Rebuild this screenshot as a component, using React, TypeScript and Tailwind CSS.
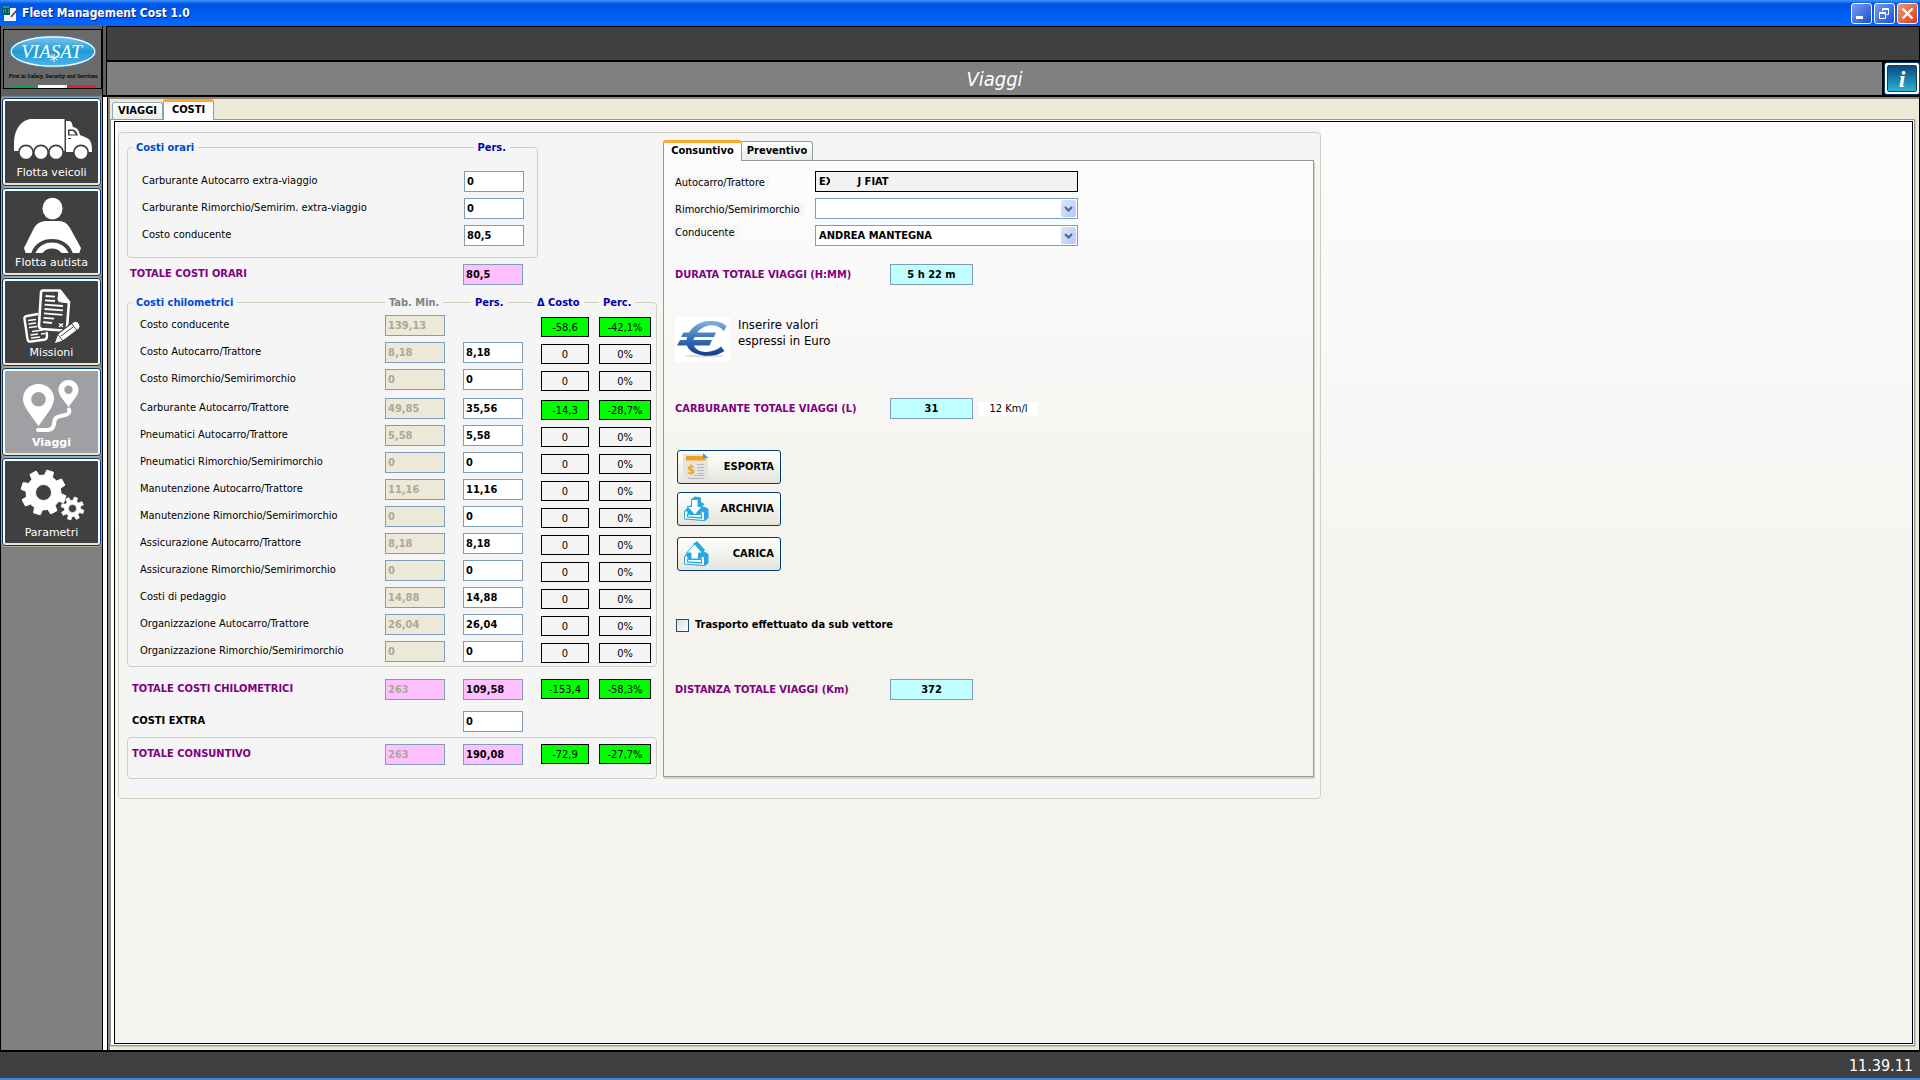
import type { ReactNode } from 'react'

type Delta = { costo: string; perc: string; green?: boolean }
type Row = { label: string; min: string; pers?: string; delta: Delta }

const zero: Delta = { costo: '0', perc: '0%' }

const firstRows: Row[] = [
  { label: 'Costo conducente', min: '139,13', delta: { costo: '-58,6', perc: '-42,1%', green: true } },
  { label: 'Costo Autocarro/Trattore', min: '8,18', pers: '8,18', delta: zero },
  { label: 'Costo Rimorchio/Semirimorchio', min: '0', pers: '0', delta: zero },
]

const otherRows: Row[] = [
  { label: 'Carburante Autocarro/Trattore', min: '49,85', pers: '35,56', delta: { costo: '-14,3', perc: '-28,7%', green: true } },
  { label: 'Pneumatici Autocarro/Trattore', min: '5,58', pers: '5,58', delta: zero },
  { label: 'Pneumatici Rimorchio/Semirimorchio', min: '0', pers: '0', delta: zero },
  { label: 'Manutenzione Autocarro/Trattore', min: '11,16', pers: '11,16', delta: zero },
  { label: 'Manutenzione Rimorchio/Semirimorchio', min: '0', pers: '0', delta: zero },
  { label: 'Assicurazione Autocarro/Trattore', min: '8,18', pers: '8,18', delta: zero },
  { label: 'Assicurazione Rimorchio/Semirimorchio', min: '0', pers: '0', delta: zero },
  { label: 'Costi di pedaggio', min: '14,88', pers: '14,88', delta: zero },
  { label: 'Organizzazione Autocarro/Trattore', min: '26,04', pers: '26,04', delta: zero },
  { label: 'Organizzazione Rimorchio/Semirimorchio', min: '0', pers: '0', delta: zero },
]

function gearPath(cx: number, cy: number, outer: number, inner: number, hole: number, teeth: number, turn: number) {
  const step = (Math.PI * 2) / teeth
  const at = (r: number, a: number) => `${(cx + r * Math.cos(a)).toFixed(2)} ${(cy + r * Math.sin(a)).toFixed(2)}`
  const pts: string[] = []
  for (let i = 0; i < teeth; i++) {
    const a = i * step + turn
    pts.push(at(inner, a - step * 0.3), at(outer, a - step * 0.2), at(outer, a + step * 0.2), at(inner, a + step * 0.3))
  }
  return `M${pts.join('L')}ZM${cx + hole} ${cy}A${hole} ${hole} 0 1 0 ${cx - hole} ${cy}A${hole} ${hole} 0 1 0 ${cx + hole} ${cy}Z`
}

function TruckIcon() {
  return (
    <svg viewBox="5 101 93 62" className="w-[93px] h-[62px]" aria-hidden="true">
      <path fill="#fff" d="M14 151V143C14 129 22 119 32 119H64.500V151Z" />
      <path fill="#fff" d="M66 121H70C72 122 72 124 73 127C78 128 79 131 80 135L87 138C91 140 92 144 92 152H66Z" />
      <path fill="#404040" d="M68 129.500H73C76 130 77 132 78 135.500H68Z" />
      <path fill="#fff" d="M69.500 131H72.500C74 131.500 75 133 75.500 134.500H69.500Z" />
      <path fill="#404040" d="M68 138H71V139H68Z" />
      {[26, 41, 56, 81].map((x) => (
        <circle key={x} cx={x} cy="152.500" r="7.200" fill="#fff" stroke="#404040" strokeWidth="1.700" />
      ))}
    </svg>
  )
}

function DriverIcon() {
  return (
    <svg viewBox="5 191 93 62" className="w-[93px] h-[62px]" fill="#fff" aria-hidden="true">
      <ellipse cx="52.500" cy="208.500" rx="10" ry="10.800" />
      <path d="M26 254L24 248L34 228Q38 221 46 221H59Q66 221 70 228L81 248L79 254H73C70 244 62 239 52 239S34 244 31 254Z" />
      <path d="M35 254C38 246 45 242.500 52 242.500S66 246 69 254Z" />
      <path d="M42 254C44 250 48 248.500 52 248.500S60 250 62 254Z" fill="#404040" />
    </svg>
  )
}

function DocsIcon() {
  return (
    <svg viewBox="5 281 93 62" className="w-[93px] h-[62px]" fill="none" stroke="#fff" strokeLinejoin="round" aria-hidden="true">
      <path strokeWidth="2.400" d="M38 314L27 316Q24 316.500 24.500 319L27.500 339Q28 342 31 341.500L45 339.500Q47 339 47 336L46.500 332" />
      <path strokeWidth="1.700" d="M28 320.500L36 319.500M28.500 324L36 323M29 327.500L37 326.500M32 331.500L43 330M30.500 335L38 334M31 338L40 337M41 334L45 333.500" />
      <path fill="#404040" strokeWidth="2.600" d="M43 290.500H60L69 302L67 327Q66.500 330.500 63 330.500L42 329Q38.500 328.500 39 325L41 293Q41 290.500 43 290.500Z" />
      <path fill="#fff" strokeWidth="1" d="M59 290L58 299Q58 302 61 302L70 303Z" />
      <path strokeWidth="1.800" d="M45.500 296L55 296.600M45 300.300L55 301M44.500 304.600L63 306M44.500 309L63 310.400M44 313.400L62.500 314.800M43.500 317.800L54 318.600M43 322.200L52 323" />
      <path strokeWidth="1.500" d="M59 323.500L63 327M63 323.500L59 327" />
      <path fill="#fff" stroke="#404040" strokeWidth="1.200" d="M54 344L57.500 334L74 321.500Q76 320.500 78 322L80 325Q80.500 327 79 329L63 341Z" />
      <path stroke="#404040" strokeWidth="1" d="M57.500 334L63 341M71.500 323.500L77 330.500M61 336L73 327" />
    </svg>
  )
}

function RouteIcon() {
  return (
    <svg viewBox="5 371 93 62" className="w-[93px] h-[62px]" fill="#fff" aria-hidden="true">
      <path fillRule="evenodd" d="M38.500 384C47.500 384 54 390.500 54 399C54 406 47 414 38.500 426C30 414 23 406 23 399C23 390.500 29.500 384 38.500 384ZM38.500 392A7.300 7.300 0 1 0 38.500 406.600A7.300 7.300 0 1 0 38.500 392Z" />
      <path fillRule="evenodd" d="M68.500 380C74.500 380 78.500 384.500 78.500 390C78.500 395 74 399 68.500 407C63 399 58.500 395 58.500 390C58.500 384.500 62.500 380 68.500 380ZM68.500 385.500A4.200 4.200 0 1 0 68.500 393.900A4.200 4.200 0 1 0 68.500 385.500Z" />
      <path fill="none" stroke="#fff" strokeWidth="4" strokeLinecap="round" d="M38 430H47C53 430 54 426 54.500 421C55 416 60 416 63 415.500C68 415 70 413 69 409.500" />
    </svg>
  )
}

function GearsIcon() {
  return (
    <svg viewBox="5 461 93 62" className="w-[93px] h-[62px]" fill="#fff" fillRule="evenodd" aria-hidden="true">
      <path d={gearPath(43.5, 492.5, 22.6, 17.5, 8, 8, 0.3)} stroke="#fff" strokeLinejoin="round" />
      <path d={gearPath(72.5, 508.5, 11.6, 8.2, 4, 8, 0.3)} stroke="#fff" strokeLinejoin="round" strokeWidth=".6" />
    </svg>
  )
}

function ViasatLogo() {
  return (
    <svg viewBox="0 0 97 58" className="w-[97px] h-[58px]" aria-hidden="true">
      <defs>
        <linearGradient id="oval" x1="0" y1="0" x2="0" y2="1">
          <stop offset="0" stopColor="#7cc4ea" />
          <stop offset=".5" stopColor="#219bd8" />
          <stop offset="1" stopColor="#4db4e6" />
        </linearGradient>
      </defs>
      <ellipse cx="49" cy="21.500" rx="43.500" ry="16.300" fill="#3f8fc0" />
      <ellipse cx="49" cy="21.500" rx="41.800" ry="14.700" fill="url(#oval)" stroke="#fff" strokeWidth="1.200" />
      <text x="47.500" y="28" textAnchor="middle" fontFamily="'Liberation Serif', serif" fontStyle="italic" fontSize="19" fill="#fff">
        VIASAT
      </text>
      <path d="M50 24V32M46.500 26L53.500 30M53.500 26L46.500 30" stroke="#fff" strokeWidth="1" />
      <text x="49" y="48" textAnchor="middle" fontFamily="'Liberation Serif', serif" fontSize="6" fill="#000" stroke="#000" strokeWidth=".15">
        First in Safety, Security and Services
      </text>
      <path fill="#12a04a" d="M5 55H34V58H5Z" />
      <path fill="#fff" d="M34 55H63V58H34Z" />
      <path fill="#e3202b" d="M63 55H92V58H63Z" />
    </svg>
  )
}

function EuroIcon() {
  return (
    <svg viewBox="0 0 55 45" className="w-[55px] h-[45px] bg-white" aria-hidden="true">
      <defs>
        <linearGradient id="euro" x1="0" y1="0" x2="0" y2="1">
          <stop offset="0" stopColor="#7fb0e2" />
          <stop offset=".5" stopColor="#3a70b8" />
          <stop offset="1" stopColor="#123a8c" />
        </linearGradient>
      </defs>
      <ellipse cx="29" cy="39" rx="20" ry="1.500" fill="#ddd" />
      <path fill="url(#euro)" d="M51.500 9L49 14C44 8 36 7 29 10C26 11.500 23.500 13.500 22 15.500H41L39 20H19.500L18.500 23H37L34.500 28.500H19C21 34 29 36.500 37 34C41 33 43.500 31.500 46 29.500L49.500 34C43 38.500 34 40 26 38C18 36.500 13.500 33 12 28.500H2L5 23H11.500L12 20H6L8.500 15.500H14C18 9 25 4.500 34 4C42 3.700 48 5.500 51.500 9Z" />
    </svg>
  )
}

function ReportIcon() {
  return (
    <svg viewBox="0 0 26 28" className="w-[26px] h-[28px]" aria-hidden="true">
      <path fill="#e4e4e6" d="M0 1H20L25 6V28H0Z" />
      <path fill="#f0a020" d="M3 3H22.500V7.500H3Z" />
      <path fill="#3d9cc8" d="M20 0L25.500 5H20Z" />
      <text x="4" y="21" fontFamily="'DejaVu Sans'" fontWeight="bold" fontSize="12" fill="#f0a81c">$</text>
      <path stroke="#b8b8bc" d="M14 11.500H21M14 14.500H21M14 17.500H21M14 20.500H21M11 22.500H21M5 25.500H21" />
    </svg>
  )
}

function TrayIcon({ up }: { up?: boolean }) {
  return (
    <svg viewBox="0 0 26 26" className="w-[26px] h-[26px]" aria-hidden="true">
      <path fill="#29a8e0" d="M3 13L8 9L22 11L25.500 13V22L22 25L1 23V16Z" />
      <path fill="#fff" stroke="#29a8e0" d="M1.500 16L4 14L5.500 18.500H17.500L19 15L21.500 16.500V24.500L1.500 23Z" />
      <path fill="none" stroke="#29a8e0" strokeWidth="1.300" d="M4.500 18V21L18.500 22V18" />
      {up ? (
        <>
          <path fill="#29a8e0" d="M10 3L14 0L22 9L20 12L17 10Z" />
          <path fill="#fff" stroke="#29a8e0" d="M11.500 3L19.500 12H15.500V18H8V12H3.500Z" />
        </>
      ) : (
        <>
          <path fill="#29a8e0" d="M8 3L12 .5L18 1.500V6L21.500 8L18 12L11 8Z" />
          <path fill="#fff" stroke="#29a8e0" d="M8.500 3.500H15V10.500H19L12 19L4 10.500H8.500Z" />
        </>
      )}
    </svg>
  )
}

function NavButton({ label, icon, active }: { label: string; icon: ReactNode; active?: boolean }) {
  return (
    <button className="block w-full border border-[#003c74] rounded-[3px] outline outline-[#a8a8a0]">
      <span
        className={`flex flex-col items-center h-[86px] border-2 border-b-[#e8e6d8] border-white rounded-[3px] text-white font-['DejaVu_Sans',sans-serif] ${
          active ? 'bg-[#a0a0a4] font-bold' : 'bg-[#404040]'
        }`}
      >
        {icon}
        <span className="leading-5">{label}</span>
      </span>
    </button>
  )
}

function Field({ label, value, tone = 'white', disabled }: { label: string; value: string; tone?: 'white' | 'pink' | 'beige'; disabled?: boolean }) {
  const bg = tone === 'pink' ? 'bg-[#ffc0ff]' : tone === 'beige' ? 'bg-[#ece9d8]' : 'bg-white'
  return (
    <input
      aria-label={label}
      defaultValue={value}
      disabled={disabled}
      className={`w-[60px] h-[21px] px-[2px] border border-[#7f9db9] font-bold ${bg} ${disabled ? 'text-[#aca899]' : 'text-black'}`}
    />
  )
}

function DeltaCells({ delta }: { delta: Delta }) {
  const bg = delta.green ? 'bg-[#00ff00]' : ''
  return (
    <>
      <output className={`w-12 h-5 border border-black text-center leading-5 ${bg}`}>{delta.costo}</output>
      <output className={`w-[52px] h-5 border border-black text-center leading-5 ${bg}`}>{delta.perc}</output>
    </>
  )
}

const grid = 'grid grid-cols-[1fr_78px_78px_58px_52px]'

function CostRow({ row }: { row: Row }) {
  return (
    <div className="grid grid-cols-[1fr_78px_78px_110px] h-[22px]">
      <span className="leading-5">{row.label}</span>
      <Field label={`${row.label} Tab. Min.`} value={row.min} tone="beige" disabled />
      {row.pers !== undefined ? <Field label={row.label} value={row.pers} /> : <span />}
      <div className="flex items-end justify-between">
        <DeltaCells delta={row.delta} />
      </div>
    </div>
  )
}

function HourRow({ id, label, value }: { id: string; label: string; value: string }) {
  return (
    <div className="flex justify-between">
      <label htmlFor={id} className="leading-5">{label}</label>
      <input id={id} defaultValue={value} className="w-[60px] h-[21px] px-[2px] bg-white border border-[#7f9db9] font-bold" />
    </div>
  )
}

function Combo({ id, value }: { id: string; value: string }) {
  return (
    <div className="relative w-[263px]">
      <select id={id} defaultValue={value} className="block appearance-none w-full h-[21px] pl-[3px] bg-white border border-[#7f9db9] font-bold">
        <option value={value}>{value}</option>
      </select>
      <span className="pointer-events-none absolute right-[2px] top-[2px] flex items-center justify-center w-[15px] h-[17px] rounded-[2px] bg-linear-to-br from-[#dbe6fe] to-[#b3c8f8]">
        <svg viewBox="0 0 9 6" className="w-[9px] h-[6px]" fill="none" stroke="#4d6185" strokeWidth="2" aria-hidden="true">
          <path d="M1 1L4.500 4.500L8 1" />
        </svg>
      </span>
    </div>
  )
}

function TotalBox({ id, label, value, note }: { id: string; label: string; value: string; note?: string }) {
  return (
    <div className="flex items-center">
      <label htmlFor={id} className="w-[215px] font-bold text-[#800080]">{label}</label>
      <input id={id} readOnly defaultValue={value} className="w-[83px] h-[21px] bg-[#c0ffff] border border-[#7f9db9] text-center font-bold" />
      {note && <span className="ml-1.5 w-[59px] bg-white text-center leading-[14px]">{note}</span>}
    </div>
  )
}

function ActionButton({ label, icon }: { label: string; icon: ReactNode }) {
  return (
    <button className="flex items-center justify-between w-[104px] h-[34px] pl-[5px] pr-[6px] border border-[#003c74] rounded-[3px] bg-linear-to-b from-white via-[#f2f2ee] to-[#e6e4da] font-bold">
      {icon}
      {label}
    </button>
  )
}

const groupBox = 'border border-[#d0d0bf] rounded-[4px]'
const head = 'bg-[#f5f5f5] px-1 font-bold'

function CostsColumn() {
  return (
    <div className="w-[530px] ml-2 mt-[14px]">
      <fieldset className={`${groupBox} w-[411px] h-[111px] pl-[14px] pr-[13px]`}>
        <div className="flex justify-between -mt-2 -ml-2.5 pr-[14px] leading-4">
          <span className={`${head} text-[#0046d5]`}>Costi orari</span>
          <span className={`${head} text-[#0000b0]`}>Pers.</span>
        </div>
        <div className="flex flex-col gap-[6px] mt-[15px]">
          <HourRow id="extra-autocarro" label="Carburante Autocarro extra-viaggio" value="0" />
          <HourRow id="extra-rimorchio" label="Carburante Rimorchio/Semirim. extra-viaggio" value="0" />
          <HourRow id="orario-conducente" label="Costo conducente" value="80,5" />
        </div>
      </fieldset>

      <div className={`${grid} mt-[6px] pl-[3px] pr-[6px] h-[21px]`}>
        <span className="col-span-2 leading-5 font-bold text-[#800080]">TOTALE COSTI ORARI</span>
        <Field label="Totale costi orari" value="80,5" tone="pink" />
      </div>

      <fieldset className={`${groupBox} mt-[17px] pl-3 pr-[5px] pb-[3px]`}>
        <div className={`${grid} -mt-2 -ml-2 leading-4`}>
          <span><span className={`${head} text-[#0046d5]`}>Costi chilometrici</span></span>
          <span><span className={`${head} text-[#808080]`}>Tab. Min.</span></span>
          <span className="pl-2"><span className={`${head} text-[#0000b0]`}>Pers.</span></span>
          <span className="-ml-2"><span className={`${head} text-[#0000b0]`}>Δ Costo</span></span>
          <span><span className={`${head} text-[#0000b0]`}>Perc.</span></span>
        </div>
        <div className="flex flex-col gap-[5px] mt-1">
          {firstRows.map((row) => <CostRow key={row.label} row={row} />)}
        </div>
        <div className="flex flex-col gap-[5px] mt-[7px]">
          {otherRows.map((row) => <CostRow key={row.label} row={row} />)}
        </div>
      </fieldset>

      <div className={`${grid} mt-3 pl-[5px] pr-[6px] h-[21px]`}>
        <span className="leading-5 font-bold text-[#800080]">TOTALE COSTI CHILOMETRICI</span>
        <Field label="Totale costi chilometrici Tab. Min." value="263" tone="pink" disabled />
        <Field label="Totale costi chilometrici" value="109,58" tone="pink" />
        <DeltaCells delta={{ costo: '-153,4', perc: '-58,3%', green: true }} />
      </div>

      <div className={`${grid} mt-[11px] pl-[5px] pr-[6px] h-[21px]`}>
        <span className="col-span-2 leading-5 font-bold">COSTI EXTRA</span>
        <Field label="Costi extra" value="0" />
      </div>

      <div className={`${groupBox} ${grid} mt-[5px] pt-[6px] pl-1 pr-[5px] h-[42px] items-start`}>
        <span className="leading-5 font-bold text-[#800080]">TOTALE CONSUNTIVO</span>
        <Field label="Totale consuntivo Tab. Min." value="263" tone="pink" disabled />
        <Field label="Totale consuntivo" value="190,08" tone="pink" />
        <DeltaCells delta={{ costo: '-72,9', perc: '-27,7%', green: true }} />
      </div>
    </div>
  )
}

function SummaryPanel() {
  const patch = 'bg-[#f5f5f5] px-[2px] pr-1 -ml-[2px] leading-[13px]'
  return (
    <div className="flex flex-col w-[651px] ml-[6px] mt-[7px] mb-[21px]">
      <div className="relative z-10 flex items-end h-[21px] -mb-px" role="tablist">
        <button role="tab" aria-selected="true" className="w-[79px] h-[21px] pb-[3px] border-t-[3px] border-x border-t-[#ffa82d] border-x-[#919b9c] rounded-t-[3px] bg-[#fcfcfe] font-bold leading-4">
          Consuntivo
        </button>
        <button role="tab" aria-selected="false" className="w-[71px] h-[19px] mb-px border border-l-0 border-b-0 border-[#919b9c] rounded-tr-[3px] bg-linear-to-b from-white to-[#ecebe6] font-bold leading-4">
          Preventivo
        </button>
      </div>
      <div className="flex-1 border border-[#919b9c] shadow-[1px_2px_0_#d8d5c4] bg-linear-to-b from-[#fcfcfe] to-[#f4f3ee] to-60% pl-[11px] pt-[10px]">
        <div className="grid grid-cols-[140px_263px] gap-y-[6px]">
          <label htmlFor="autocarro" className="pt-1"><span className={patch}>Autocarro/Trattore</span></label>
          <div className="relative">
            <input id="autocarro" readOnly defaultValue={'EX' + '\u00a0'.repeat(7) + 'J FIAT'} className="block w-full h-[21px] pl-[3px] bg-[#f2f2f2] border border-black font-bold" />
            <span className="absolute left-[15px] top-[3px] w-6 h-[15px] bg-[#f2f2f2]" />
          </div>
          <label htmlFor="rimorchio" className="pt-1"><span className={patch}>Rimorchio/Semirimorchio</span></label>
          <Combo id="rimorchio" value="" />
          <label htmlFor="conducente"><span className={patch}>Conducente</span></label>
          <Combo id="conducente" value="ANDREA MANTEGNA" />
        </div>

        <div className="mt-[18px]">
          <TotalBox id="durata" label="DURATA TOTALE VIAGGI (H:MM)" value="5 h 22 m" />
        </div>

        <div className="flex gap-2 mt-8">
          <EuroIcon />
          <p className="text-[13px] leading-4">
            Inserire valori
            <br />
            espressi in Euro
          </p>
        </div>

        <div className="mt-9">
          <TotalBox id="carburante" label="CARBURANTE TOTALE VIAGGI (L)" value="31" note="12 Km/l" />
        </div>

        <div className="flex flex-col mt-[31px] ml-[2px]">
          <ActionButton label="ESPORTA" icon={<ReportIcon />} />
          <div className="flex flex-col gap-[11px] mt-2">
            <ActionButton label="ARCHIVIA" icon={<TrayIcon />} />
            <ActionButton label="CARICA" icon={<TrayIcon up />} />
          </div>
        </div>

        <label className="flex items-center gap-[6px] mt-[46px] ml-px font-bold leading-4">
          <input type="checkbox" className="appearance-none w-[13px] h-[13px] border border-[#1c5180] bg-linear-to-br from-[#dcdcd7] to-white" />
          Trasporto effettuato da sub vettore
        </label>

        <div className="mt-[46px]">
          <TotalBox id="distanza" label="DISTANZA TOTALE VIAGGI (Km)" value="372" />
        </div>
      </div>
    </div>
  )
}

function TitleBar() {
  const btn = 'flex items-center justify-center w-[21px] h-[21px] rounded-[3px] border border-white'
  return (
    <header className="flex items-center h-[26px] pl-[2px] pr-[2px] bg-linear-to-b from-[#3d95ff] from-0% via-[#0054e3] via-15% to-[#0066ff] to-90%">
      <svg viewBox="0 0 16 16" className="w-4 h-4" aria-hidden="true">
        <path fill="#f4f4f0" d="M2 3H14V16H2Z" />
        <path fill="#0a5a66" d="M0 0H8V10H0Z" />
        <path stroke="#20e0e0" d="M1 2H7M1 5H2M3 5H4M6 5H7M1 7H2M3 7H4M6 7H7" />
        <path stroke="#444" strokeWidth="1.500" d="M15 5L9 12" />
      </svg>
      <h1 className="flex-1 ml-1 text-white text-xs font-bold [text-shadow:1px_1px_#0a1883]">Fleet Management Cost 1.0</h1>
      <div className="flex gap-[2px]">
        <button aria-label="Riduci a icona" className={`${btn} bg-linear-to-br from-[#7a9cf0] to-[#1c49d8]`}>
          <svg viewBox="0 0 19 19" className="w-[19px] h-[19px]"><path fill="#fff" d="M4 12H11V15H4Z" /></svg>
        </button>
        <button aria-label="Ripristina" className={`${btn} bg-linear-to-br from-[#7a9cf0] to-[#1c49d8]`}>
          <svg viewBox="0 0 19 19" className="w-[19px] h-[19px]" fill="none" stroke="#fff">
            <path d="M7.500 7V4.500H13.500V10.500H11.500M4.500 8.500H10.500V14.500H4.500ZM7 5.500H14M4 9.500H11" />
          </svg>
        </button>
        <button aria-label="Chiudi" className={`${btn} bg-linear-to-br from-[#f0957c] to-[#d43a10]`}>
          <svg viewBox="0 0 19 19" className="w-[19px] h-[19px]" stroke="#fff" strokeWidth="2.300"><path d="M4.500 4.500L14.500 14.500M14.500 4.500L4.500 14.500" /></svg>
        </button>
      </div>
    </header>
  )
}

export default function App() {
  return (
    <div className="flex flex-col min-h-screen bg-black text-black text-[11px] leading-4 font-['DejaVu_Sans_Condensed','DejaVu_Sans',sans-serif]">
      <TitleBar />

      <div className="flex flex-1">
        <aside className="flex flex-col w-[101px] ml-px mr-px bg-[#808080]">
          <div className="h-[70px] pt-[3px] pl-[2px] bg-[#606060]">
            <div className="w-[99px] h-[60px] border border-black bg-[#6a6a6a]">
              <ViasatLogo />
            </div>
          </div>
          <nav className="flex flex-col gap-[2px] pt-[2px] px-px">
            <NavButton label="Flotta veicoli" icon={<TruckIcon />} />
            <NavButton label="Flotta autista" icon={<DriverIcon />} />
            <NavButton label="Missioni" icon={<DocsIcon />} />
            <NavButton label="Viaggi" icon={<RouteIcon />} active />
            <NavButton label="Parametri" icon={<GearsIcon />} />
          </nav>
        </aside>

        <div className="flex flex-1 flex-col">
          <div className="flex flex-col h-[70px]">
            <div className="flex h-9 border-l-[3px] border-[#606060]">
              <div className="flex-1 mt-px mb-[2px] mr-px ml-px bg-[#404040]" />
            </div>
            <div className="flex h-[33px] border-l-[3px] border-[#606060]">
              <h2 className="flex-1 ml-px bg-[#808080] text-center text-white text-xl leading-[34px] italic">Viaggi</h2>
              <button aria-label="Informazioni" className="ml-[2px] w-9 h-[33px] rounded-[3px] border border-[#003c74] bg-white p-[2px]">
                <span className="block h-full rounded-[2px] border border-[#1a3c50] bg-linear-to-b from-[#0a4a7c] to-[#2cb4d4] text-center text-white text-[24px] leading-[26px] font-bold italic font-['Liberation_Serif',serif]">
                  i
                </span>
              </button>
            </div>
          </div>

          <div className="flex flex-1 mt-px mr-px border-l-4 border-white">
            <main className="flex flex-1 flex-col ml-px border-l-2 border-t-2 border-[#8d897a] bg-[#ece9d8] pr-[4px] pb-[4px]">
              <div className="flex items-end h-5 pl-[2px]" role="tablist">
                <button role="tab" aria-selected="false" className="w-[51px] h-[17px] border border-b-0 border-[#91a7b4] rounded-t-[3px] bg-linear-to-b from-white to-[#ecebe6] font-bold leading-4">
                  VIAGGI
                </button>
                <button role="tab" aria-selected="true" className="relative z-10 w-[51px] h-[21px] -mb-px pb-1 border-t-[3px] border-x border-t-[#ffa82d] border-x-[#919b9c] rounded-t-[3px] bg-[#fcfcfe] font-bold leading-4">
                  COSTI
                </button>
              </div>
              <div className="flex flex-1 flex-col p-px pl-[3px] border border-[#919b9c] bg-white shadow-[1px_1px_0_#c9c6b4]">
                <div className="flex-1 border border-black bg-linear-to-b from-[#fcfcfe] to-[#f4f3ee] to-60% pl-[3px] pt-[3px]">
                  <div className="w-[1203px] pt-[7px] bg-[#f5f5f5] rounded-b-[4px]">
                    <div className={`${groupBox} flex h-[667px]`}>
                      <CostsColumn />
                      <SummaryPanel />
                    </div>
                  </div>
                </div>
              </div>
            </main>
          </div>
        </div>
      </div>

      <footer className="h-7 mt-[2px] border-b-2 border-b-[#3f82d8] bg-[#404040] pr-[7px] text-right text-white text-base leading-7">11.39.11</footer>
    </div>
  )
}
